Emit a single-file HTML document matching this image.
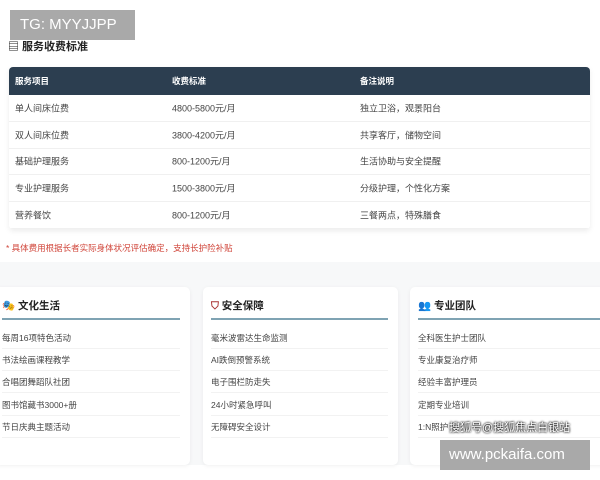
<!DOCTYPE html>
<html><head><meta charset="utf-8"><style>
*{margin:0;padding:0;box-sizing:border-box}
body{width:600px;height:480px;overflow:hidden;background:#fff;font-family:"Liberation Sans","Noto Sans CJK SC",sans-serif;position:relative;color:#333}
.abs{position:absolute}
.title{left:8px;top:38px;font-size:11px;font-weight:bold;color:#222}
.tbl{left:9px;top:67px;width:581px;height:162px;box-shadow:0 2px 6px rgba(0,0,0,.08);border-radius:4px;overflow:hidden}
.hd{height:28px;background:#2c3e50;color:#fff;font-size:8.5px;font-weight:bold;position:relative}
.row{height:26.8px;border-bottom:1px solid #f0f0f0;position:relative;font-size:9px;color:#444;background:#fff}
.c1,.c2,.c3{position:absolute;top:50%;transform:translateY(-50%)}
.c1{left:6px}.c2{left:163px}.c3{left:351px}
.note{left:6px;top:242px;font-size:8.5px;color:#d0453a}
.band{left:0;top:262px;width:600px;height:203px;background:#f7f8f9}
.card{top:287px;height:178px;background:#fff;border-radius:5px;box-shadow:0 1px 4px rgba(0,0,0,.06)}
.ct{position:absolute;left:8px;top:11px;font-size:10.5px;font-weight:bold;color:#222}
.ul{position:absolute;left:8px;right:10px;top:31px;height:2px;background:#7fa3b3}
.it{position:absolute;left:8px;right:10px;height:22px;font-size:8.5px;color:#444;border-bottom:1px solid #f2f2f2;line-height:22px}
.wm1{left:10px;top:10px;width:125px;height:30px;background:#a9a9a9;color:#fff;font-size:15px;line-height:30px;padding-left:10px}
.wm2{left:440px;top:440px;width:150px;height:30px;background:#a9a9a9;color:#fff;font-size:15px;line-height:30px;padding-left:9px}
.wm3{left:449px;top:419px;font-size:11px;color:#fff;text-shadow:0 0 2px #000,0 0 2px #000}
</style></head><body>
<div class="abs title">▤ 服务收费标准</div>
<div class="abs tbl">
<div class="hd"><span class="c1">服务项目</span><span class="c2">收费标准</span><span class="c3">备注说明</span></div>
<div class="row"><span class="c1">单人间床位费</span><span class="c2">4800-5800元/月</span><span class="c3">独立卫浴，观景阳台</span></div>
<div class="row"><span class="c1">双人间床位费</span><span class="c2">3800-4200元/月</span><span class="c3">共享客厅，储物空间</span></div>
<div class="row"><span class="c1">基础护理服务</span><span class="c2">800-1200元/月</span><span class="c3">生活协助与安全提醒</span></div>
<div class="row"><span class="c1">专业护理服务</span><span class="c2">1500-3800元/月</span><span class="c3">分级护理，个性化方案</span></div>
<div class="row"><span class="c1">营养餐饮</span><span class="c2">800-1200元/月</span><span class="c3">三餐两点，特殊膳食</span></div>
</div>
<div class="abs note">* 具体费用根据长者实际身体状况评估确定，支持长护险补贴</div>
<div class="abs band"></div>
<div class="abs card" style="left:-6px;width:196px">
<div class="ct">🎭 文化生活</div><div class="ul"></div>
<div class="it" style="top:40px">每周16项特色活动</div>
<div class="it" style="top:62px">书法绘画课程教学</div>
<div class="it" style="top:84px">合唱团舞蹈队社团</div>
<div class="it" style="top:107px">图书馆藏书3000+册</div>
<div class="it" style="top:129px">节日庆典主题活动</div>
</div>
<div class="abs card" style="left:203px;width:195px">
<div class="ct"><span style="color:#a33">⛉</span> 安全保障</div><div class="ul"></div>
<div class="it" style="top:40px">毫米波雷达生命监测</div>
<div class="it" style="top:62px">AI跌倒预警系统</div>
<div class="it" style="top:84px">电子围栏防走失</div>
<div class="it" style="top:107px">24小时紧急呼叫</div>
<div class="it" style="top:129px">无障碍安全设计</div>
</div>
<div class="abs card" style="left:410px;width:200px">
<div class="ct">👥 专业团队</div><div class="ul"></div>
<div class="it" style="top:40px">全科医生护士团队</div>
<div class="it" style="top:62px">专业康复治疗师</div>
<div class="it" style="top:84px">经验丰富护理员</div>
<div class="it" style="top:107px">定期专业培训</div>
<div class="it" style="top:129px">1:N照护</div>
</div>
<div class="abs wm1">TG: MYYJJPP</div>
<div class="abs wm3">搜狐号@搜狐焦点白银站</div>
<div class="abs wm2">www.pckaifa.com</div>
</body></html>
